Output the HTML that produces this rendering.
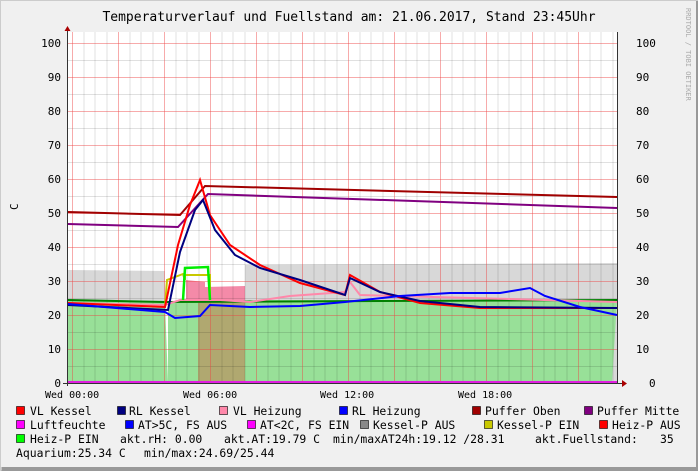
<!DOCTYPE html><html><head><style>body{margin:0;background:#f0f0f0}svg{display:block;font-family:"DejaVu Sans Mono","Liberation Mono",monospace}</style></head><body>
<svg width="698" height="471" xmlns="http://www.w3.org/2000/svg">
<rect x="0" y="0" width="698" height="471" fill="#f0f0f0"/>
<rect x="0.5" y="0.5" width="697" height="470" fill="none" stroke="#ccc"/>
<rect x="1.5" y="467" width="696" height="4" fill="#999"/>
<rect x="696" y="1" width="2" height="470" fill="#999"/>
<text x="349" y="21" font-size="13" text-anchor="middle" fill="#000">Temperaturverlauf und Fuellstand am: 21.06.2017, Stand 23:45Uhr</text>
<text transform="translate(686,8) rotate(90)" font-size="7" fill="#aaa">RRDTOOL / TOBI OETIKER</text>
<rect x="68" y="32" width="549" height="351" fill="#fff"/>
<path d="M68 270 L165 271 L165 383 L68 383Z M245 265 L617 263 L617 383 L245 383Z" fill="#d8d8d8"/>
<path d="M68 300 L165 302 L168 383 L68 383Z" fill="#98e098"/>
<path d="M245 300 L617 300 L612 383 L245 383Z" fill="#98e098"/>
<path d="M186 280 L205 282 L205 383 L186 383Z" fill="#f48aa8"/>
<path d="M205 287 L245 286 L245 383 L205 383Z" fill="#f48aa8"/>
<path d="M198 302 L245 302 L245 383 L198 383Z" fill="#b0a870"/>
<path d="M168 302 L198 302 L198 383 L168 383Z" fill="#98e098"/>
<g stroke="#000" stroke-opacity="0.12" stroke-width="1">
<path d="M84 32V383M95 32V383M107 32V383M130 32V383M141 32V383M153 32V383M176 32V383M187 32V383M199 32V383M222 32V383M233 32V383M245 32V383M268 32V383M279 32V383M291 32V383M314 32V383M325 32V383M337 32V383M360 32V383M371 32V383M383 32V383M406 32V383M417 32V383M429 32V383M452 32V383M463 32V383M475 32V383M498 32V383M509 32V383M521 32V383M544 32V383M555 32V383M567 32V383M590 32V383M601 32V383M613 32V383"/>
<path d="M68 60.5H617M68 94.5H617M68 128.5H617M68 162.5H617M68 196.5H617M68 230.5H617M68 264.5H617M68 298.5H617M68 332.5H617M68 366.5H617"/>
</g>
<g stroke="#e44" stroke-opacity="0.45" stroke-width="1">
<path d="M72.5 32V383M118.5 32V383M164.5 32V383M210.5 32V383M256.5 32V383M302.5 32V383M348.5 32V383M394.5 32V383M440.5 32V383M486.5 32V383M532.5 32V383M578.5 32V383"/>
<path d="M68 43.5H617M68 77.5H617M68 111.5H617M68 145.5H617M68 179.5H617M68 213.5H617M68 247.5H617M68 281.5H617M68 315.5H617M68 349.5H617"/>
</g>
<g fill="none" stroke-width="2">
<path d="M68 212 L180 215 L205 186 L617 197" stroke="#a00000"/>
<path d="M68 224 L178 227 L208 194 L617 208" stroke="#800080"/>
<path d="M68 300 L165 302 L617 300" stroke="#008000"/>
<path d="M68 303 L165 305 L180 300 L220 300 L250 302 L290 296 L345 292 L350 282 L360 295 L617 302" stroke="#ff88aa"/>
<path d="M165 307 L167 280 L183 274 L185 280 L185 275 L210 275 L210 296" stroke="#c8c800"/>
<path d="M183 300 L185 268 L208 267 L210 300" stroke="#00ee00" stroke-width="2.5"/>
<path d="M68 303 L165 307 L178 245 L190 205 L200 180 L210 215 L230 245 L260 265 L300 283 L345 295 L350 275 L380 292 L420 303 L480 308 L617 308" stroke="#f00"/>
<path d="M68 305 L168 310 L180 252 L195 210 L203 200 L215 230 L235 255 L260 268 L300 280 L345 295 L350 278 L380 292 L420 301 L480 307 L617 308" stroke="#000080"/>
<path d="M68 304 L165 312 L175 318 L200 316 L210 305 L250 307 L300 306 L345 302 L400 296 L450 293 L500 293 L530 288 L545 296 L580 307 L617 315" stroke="#0000ff"/>
</g>
<path d="M68 382 H617" stroke="#e020e0" stroke-width="2"/>
<path d="M67.5 30V386M63 383.5H622" stroke="#333" stroke-width="1"/>
<path d="M617.5 32V383" stroke="#333"/>
<path d="M622 380 L627 383.5 L622 387Z" fill="#a00"/>
<path d="M64.5 31 L67.5 26 L70.5 31Z" fill="#a00"/>
<g font-size="11" fill="#000">
<g text-anchor="end"><text x="61" y="47">100</text><text x="61" y="81">90</text><text x="61" y="115">80</text><text x="61" y="149">70</text><text x="61" y="183">60</text><text x="61" y="217">50</text><text x="61" y="251">40</text><text x="61" y="285">30</text><text x="61" y="319">20</text><text x="61" y="353">10</text><text x="61" y="387">0</text></g>
<text x="636" y="47">100</text><text x="636" y="81">90</text><text x="636" y="115">80</text><text x="636" y="149">70</text><text x="636" y="183">60</text><text x="636" y="217">50</text><text x="636" y="251">40</text><text x="636" y="285">30</text><text x="636" y="319">20</text><text x="636" y="353">10</text><text x="649" y="387">0</text>
<text transform="translate(18,210) rotate(-90)">C</text>
</g>
<g font-size="10" fill="#000">
<text x="45" y="398">Wed 00:00</text><text x="183" y="398">Wed 06:00</text><text x="320" y="398">Wed 12:00</text><text x="458" y="398">Wed 18:00</text>
</g>
<g font-size="11.4" fill="#000">
<g stroke="#000" stroke-width="0.6">
<rect x="16.5" y="406.5" width="8" height="8" fill="#f00"/><rect x="117.5" y="406.5" width="8" height="8" fill="#000080"/><rect x="219.5" y="406.5" width="8" height="8" fill="#ff88aa"/><rect x="339.5" y="406.5" width="8" height="8" fill="#00f"/><rect x="472.5" y="406.5" width="8" height="8" fill="#a00000"/><rect x="584.5" y="406.5" width="8" height="8" fill="#800080"/>
<rect x="16.5" y="420.5" width="8" height="8" fill="#f0f"/><rect x="125.5" y="420.5" width="8" height="8" fill="#00f"/><rect x="247.5" y="420.5" width="8" height="8" fill="#f0f"/><rect x="360.5" y="420.5" width="8" height="8" fill="#888"/><rect x="484.5" y="420.5" width="8" height="8" fill="#c8c800"/><rect x="599.5" y="420.5" width="8" height="8" fill="#f00"/>
<rect x="16.5" y="434.5" width="8" height="8" fill="#0f0"/>
</g>
<text x="30" y="415">VL Kessel</text><text x="129" y="415">RL Kessel</text><text x="233" y="415">VL Heizung</text><text x="352" y="415">RL Heizung</text><text x="485" y="415">Puffer Oben</text><text x="597" y="415">Puffer Mitte</text>
<text x="30" y="429">Luftfeuchte</text><text x="138" y="429">AT&gt;5C, FS AUS</text><text x="260" y="429">AT&lt;2C, FS EIN</text><text x="373" y="429">Kessel-P AUS</text><text x="497" y="429">Kessel-P EIN</text><text x="612" y="429">Heiz-P AUS</text>
<text x="30" y="443">Heiz-P EIN</text><text x="120" y="443">akt.rH: 0.00</text><text x="224" y="443">akt.AT:19.79 C</text><text x="333" y="443">min/maxAT24h:19.12 /28.31</text><text x="535" y="443">akt.Fuellstand:</text><text x="660" y="443">35</text>
<text x="16" y="457">Aquarium:25.34 C</text><text x="144" y="457">min/max:24.69/25.44</text>
</g>
</svg></body></html>
